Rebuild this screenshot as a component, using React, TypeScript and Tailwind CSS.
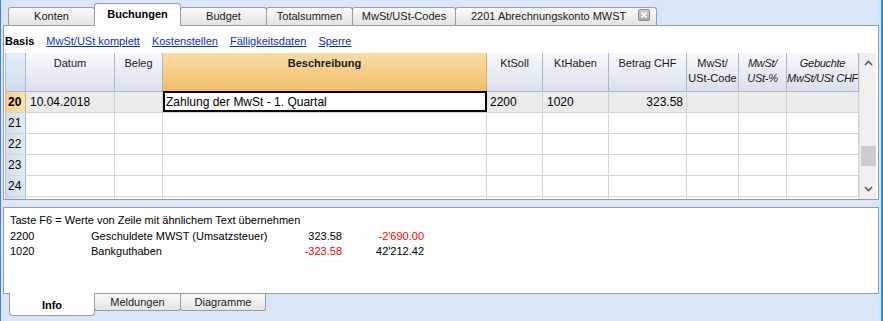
import React from "react";

const ui = "font-['Liberation_Sans',Arial,sans-serif]";

const tabs = [
  { label: "Konten", w: "w-[87px]" },
  { label: "Buchungen", w: "w-[87px]", active: true },
  { label: "Budget", w: "w-[87px]" },
  { label: "Totalsummen", w: "w-[87px]" },
  { label: "MwSt/USt-Codes", w: "w-[104px]" },
];

const views = ["MwSt/USt komplett", "Kostenstellen", "Fälligkeitsdaten", "Sperre"];

const columns = [
  { label: ["Datum"], w: "w-[89px]" },
  { label: ["Beleg"], w: "w-[48px]" },
  { label: ["Beschreibung"], w: "w-[324px]", bold: true, hl: true },
  { label: ["KtSoll"], w: "w-[56px]" },
  { label: ["KtHaben"], w: "w-[66px]" },
  { label: ["Betrag CHF"], w: "w-[78px]" },
  { label: ["MwSt/", "USt-Code"], w: "w-[52px]" },
  { label: ["MwSt/", "USt-%"], w: "w-[48px]", italic: true },
  { label: ["Gebuchte", "MwSt/USt CHF"], w: "w-[72px]", italic: true },
];

// row 25 only peeks in at the bottom edge, no number visible
const rows = [20, 21, 22, 23, 24, 25];

const infoLines = [
  { code: "2200", name: "Geschuldete MWST (Umsatzsteuer)", a: "323.58", b: "-2'690.00", aRed: false, bRed: true },
  { code: "1020", name: "Bankguthaben", a: "-323.58", b: "42'212.42", aRed: true, bRed: false },
];

function Chevron({ down }: { down?: boolean }) {
  return (
    <svg width="9" height="6" viewBox="0 0 9 6">
      <path
        d={down ? "M1 1 L4.5 4.5 L8 1" : "M1 5 L4.5 1.5 L8 5"}
        fill="none"
        stroke="#5a5a5a"
        strokeWidth="1.6"
      />
    </svg>
  );
}

function TopTabs() {
  return (
    <div className="h-[25px] flex items-end pl-[5px]">
      {tabs.map((t, i) =>
        t.active ? (
          <div
            key={t.label}
            className={`${t.w} -ml-px relative z-10 -mb-px h-[23px] bg-white border border-b-0 border-[#9a9ea6] rounded-t-[4px] flex items-center justify-center pb-[2px] text-[11px] font-bold text-black`}
          >
            {t.label}
          </div>
        ) : (
          <div
            key={t.label}
            className={`${t.w} ${i === 0 ? "" : "-ml-px"} h-[18px] bg-gradient-to-b from-[#fbfbfb] to-[#e3e3e3] border border-b-0 border-[#9a9ea6] rounded-t-[3px] flex items-center justify-center text-[11px] text-[#1a1a1a]`}
          >
            {t.label}
          </div>
        )
      )}
      <div className="w-[202px] -ml-px h-[18px] bg-gradient-to-b from-[#fbfbfb] to-[#e3e3e3] border border-b-0 border-[#9a9ea6] rounded-t-[3px] flex items-start justify-between pl-[15px] pr-[6px] text-[11px] text-[#1a1a1a]">
        <span className="self-center">2201 Abrechnungskonto MWST</span>
        <span className="mt-[1px] w-[12px] h-[12px] rounded-[2px] border border-[#8c8c8c] bg-gradient-to-b from-[#d0d0d0] to-[#a9a9a9] flex items-center justify-center">
          <svg width="6" height="6" viewBox="0 0 6 6">
            <path d="M0.5 0.5 L5.5 5.5 M5.5 0.5 L0.5 5.5" stroke="#fff" strokeWidth="1.6" />
          </svg>
        </span>
      </div>
    </div>
  );
}

function Grid() {
  return (
    <div className="h-[146px] flex overflow-hidden">
      <div className="w-[854px] flex flex-col">
        {/* header */}
        <div className="h-[39px] shrink-0 flex border-b border-[#a9b8cc]">
          <div className="w-[21px] border-l border-r border-[#a9bbd3] bg-gradient-to-b from-[#e4ecf7] to-[#d0dcee]" />
          {columns.map((c) => (
            <div
              key={c.label.join(" ")}
              className={`${c.w} border-r ${
                c.hl
                  ? "border-[#e8a85a] bg-gradient-to-b from-[#f9dca6] to-[#f1bd64]"
                  : "border-[#a9b8cc] bg-gradient-to-b from-[#f7f9fc] to-[#d9e1ec]"
              } pt-[3px] text-center text-[11px] leading-[15px] text-[#1a1a1a] whitespace-nowrap overflow-hidden ${
                c.bold ? "font-bold" : ""
              } ${c.italic ? "italic tracking-[-0.3px]" : ""}`}
            >
              {c.label.map((l) => (
                <div key={l}>{l}</div>
              ))}
            </div>
          ))}
        </div>
        {/* rows */}
        {rows.map((r) => {
          const sel = r === 20;
          return (
            <div key={r} className="h-[21px] shrink-0 flex border-b border-[#d4d4d4] text-[12px] text-black">
              <div
                className={`w-[21px] border-l border-r flex items-center pl-[2px] ${
                  sel
                    ? "border-[#e8b060] bg-gradient-to-r from-[#f7cf8e] to-[#fbe2b6] font-bold"
                    : "border-[#a9bbd3] bg-gradient-to-r from-[#d3dfef] to-[#e1e9f5]"
                }`}
              >
                {r < 25 ? r : ""}
              </div>
              {columns.map((c, ci) => {
                if (sel && ci === 2) {
                  return (
                    <div
                      key={ci}
                      className={`${c.w} bg-white border-2 border-black -mt-px flex items-center pl-[1px]`}
                    >
                      Zahlung der MwSt - 1. Quartal
                    </div>
                  );
                }
                let val = "";
                let cls = "pl-[4px]";
                if (sel) {
                  if (ci === 0) val = "10.04.2018";
                  if (ci === 3) {
                    val = "2200";
                    cls = "pl-[3px]";
                  }
                  if (ci === 4) val = "1020";
                  if (ci === 5) {
                    val = "323.58";
                    cls = "justify-end pr-[3px]";
                  }
                }
                return (
                  <div
                    key={ci}
                    className={`${c.w} border-r border-[#d4d4d4] flex items-center ${cls} ${
                      sel ? "bg-[#ebebeb]" : "bg-white"
                    }`}
                  >
                    {val}
                  </div>
                );
              })}
            </div>
          );
        })}
      </div>
      {/* scrollbar */}
      <div className="w-[17px] bg-[#f0f0f0] border-l border-[#e2e2e2] flex flex-col items-center">
        <div className="h-[20px] flex items-center">
          <Chevron />
        </div>
        <div className="h-[73px]" />
        <div className="h-[20px] w-[15px] bg-[#cdcdcd]" />
        <div className="flex-1" />
        <div className="h-[20px] flex items-center">
          <Chevron down />
        </div>
      </div>
    </div>
  );
}

export default function App() {
  return (
    <div
      className={`${ui} w-[883px] h-[321px] overflow-hidden bg-[#dae5f8] border-l border-r-2 border-[#3585de] pl-[2px] pr-[2px] flex flex-col`}
    >
      <TopTabs />

      {/* Buchungen panel */}
      <div className="h-[175px] border border-[#9c9c9c] bg-white px-[1px]">
        <div className="h-[27px] flex items-center pt-[3px] text-[11px]">
          <span className="font-bold text-black mr-[12px]">Basis</span>
          {views.map((v) => (
            <span key={v} className="text-[#0a2fd6] underline mr-[12px]">
              {v}
            </span>
          ))}
        </div>
        <Grid />
      </div>

      {/* Info panel */}
      <div className="mt-[7px] h-[87px] border border-[#9c9c9c] bg-white pt-[5px] pl-[6px] text-[11px] leading-[15.5px] text-black">
        <div>Taste F6 = Werte von Zeile mit ähnlichem Text übernehmen</div>
        {infoLines.map((l) => (
          <div key={l.code} className="flex">
            <div className="w-[81px]">{l.code}</div>
            <div className="w-[196px]">{l.name}</div>
            <div className={`w-[55px] text-right ${l.aRed ? "text-[#ff0000]" : ""}`}>{l.a}</div>
            <div className={`w-[82px] text-right ${l.bRed ? "text-[#ff0000]" : ""}`}>{l.b}</div>
          </div>
        ))}
      </div>

      {/* bottom tabs */}
      <div className="flex items-start pl-[6px] text-[11px]">
        <div className="w-[86px] h-[23px] -mt-px relative z-10 bg-white border border-t-0 border-[#9c9c9c] rounded-b-[4px] flex items-center justify-center pt-[2px] font-bold text-black">
          Info
        </div>
        <div className="w-[87px] -ml-px h-[17px] bg-gradient-to-b from-[#fafafa] to-[#e6e6e6] border border-t-0 border-[#9c9c9c] rounded-b-[3px] flex items-center justify-center text-[#1a1a1a]">
          Meldungen
        </div>
        <div className="w-[86px] -ml-px h-[17px] bg-gradient-to-b from-[#fafafa] to-[#e6e6e6] border border-t-0 border-[#9c9c9c] rounded-b-[3px] flex items-center justify-center text-[#1a1a1a]">
          Diagramme
        </div>
      </div>
    </div>
  );
}
